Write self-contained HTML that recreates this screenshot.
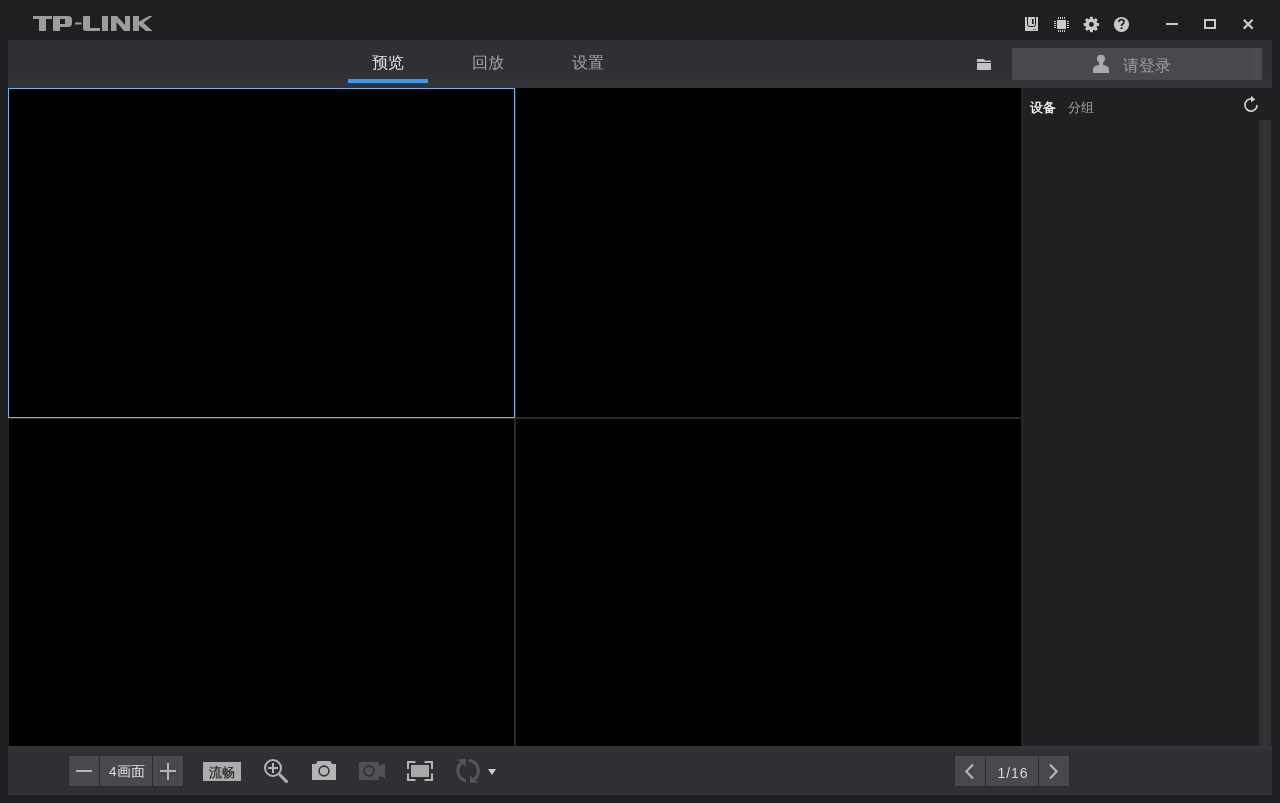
<!DOCTYPE html>
<html><head><meta charset="utf-8">
<style>
*{margin:0;padding:0;box-sizing:border-box}
html,body{width:1280px;height:803px;overflow:hidden;background:#1e1f21;font-family:"Liberation Sans",sans-serif;-webkit-font-smoothing:antialiased}
div{will-change:transform}
.abs{position:absolute}
#nav{left:8px;top:40px;width:1264px;height:48px;background:linear-gradient(#2f3033,#2f3033 60%,#333437)}
.tab{position:absolute;top:53px;font-size:16px;line-height:20px;color:#a3a3a3;white-space:nowrap}
#grid{left:8px;top:88px;width:1013px;height:658px;background:#000}
.cell{position:absolute;border:1px solid #2a2a2b;background:#000}
#panel{left:1021px;top:88px;width:251px;height:658px;background:#1f2022;border-left:2px solid #252628}
#tool{left:8px;top:746px;width:1264px;height:49px;background:linear-gradient(#343539 0,#323336 4px,#2f3033 6px,#2f3033 45px,#333437 49px)}
.btn{position:absolute;background:#48494c}
</style></head><body>
<!-- title bar -->
<svg class="abs" style="left:0;top:0" width="200" height="40">
<g fill="#9c9c9c">
<!-- T -->
<path d="M33 16H52V19H46V31H39V19H33Z"/>
<!-- P -->
<path d="M53 16H68Q72 16 72 20V23Q72 27 68 27H60V31H53ZM60 19V24H65V19Z" fill-rule="evenodd"/>
<!-- - -->
<path d="M75 22.5H81.5V24.5H75Z"/>
<!-- L -->
<path d="M83 16H90V28H100V31H86Q83 31 83 28Z"/>
<!-- I -->
<path d="M102 16H108V31H102Z"/>
<!-- N -->
<path d="M111 16H117L125 25V16H130V31H124L116.5 22V31H111Z"/>
<!-- K -->
<path d="M133 16H139V21.5L149 16H152.5L143.5 22.8L152.5 31H146L139 25.2V31H133Z"/>
</g>
</svg>

<svg class="abs" style="left:1020px;top:12px" width="240" height="26" viewBox="1020 12 240 26">
<g fill="#c8c8c8">
<!-- sd card -->
<path d="M1025 17H1038V31H1025Z"/>
<path d="M1027.5 17V24.5Q1027.5 26.5 1029.5 26.5H1033.5Q1035.5 26.5 1035.5 24.5V17" fill="none" stroke="#1e1f21" stroke-width="1"/>
<rect x="1032" y="19" width="1.7" height="5" fill="#1e1f21"/>
<rect x="1033" y="29" width="3" height="1" fill="#1e1f21" opacity="0.5"/>
<!-- chip -->
<rect x="1057" y="20" width="9" height="9"/>
<g>
<rect x="1058" y="17" width="1" height="2"/><rect x="1060" y="17" width="1" height="2"/><rect x="1062" y="17" width="1" height="2"/><rect x="1064" y="17" width="1" height="2"/>
<rect x="1058" y="30" width="1" height="2"/><rect x="1060" y="30" width="1" height="2"/><rect x="1062" y="30" width="1" height="2"/><rect x="1064" y="30" width="1" height="2"/>
<rect x="1054" y="21" width="2" height="1"/><rect x="1054" y="23" width="2" height="1"/><rect x="1054" y="25" width="2" height="1"/><rect x="1054" y="27" width="2" height="1"/>
<rect x="1067" y="21" width="2" height="1"/><rect x="1067" y="23" width="2" height="1"/><rect x="1067" y="25" width="2" height="1"/><rect x="1067" y="27" width="2" height="1"/>
</g>
<!-- gear -->
<g transform="translate(1091.4 24.5)">
<circle r="6"/>
<g id="teeth"><rect x="-1.5" y="-7.7" width="3" height="3"/></g>
<use href="#teeth" transform="rotate(45)"/><use href="#teeth" transform="rotate(90)"/><use href="#teeth" transform="rotate(135)"/>
<use href="#teeth" transform="rotate(180)"/><use href="#teeth" transform="rotate(225)"/><use href="#teeth" transform="rotate(270)"/><use href="#teeth" transform="rotate(315)"/>
<circle r="2.4" fill="#1e1f21"/>
</g>
<!-- help -->
<circle cx="1121.5" cy="24.5" r="7.6"/>
<path d="M1119 22Q1119 19.7 1121.5 19.7Q1124 19.7 1124 22Q1124 23.3 1122.6 24Q1121.5 24.6 1121.5 26" fill="none" stroke="#1e1f21" stroke-width="1.7"/>
<rect x="1120.6" y="27.3" width="1.8" height="1.8" fill="#1e1f21"/>
<!-- min -->
<rect x="1166" y="23" width="12" height="2"/>
<!-- max -->
<path d="M1204 19H1216V29H1204ZM1206 21V27H1214V21Z" fill-rule="evenodd"/>
</g>
<!-- close -->
<path d="M1243.8 19.8L1252.6 28.6M1252.6 19.8L1243.8 28.6" stroke="#c8c8c8" stroke-width="2.2"/>
</svg>

<!-- nav bar -->
<div id="nav" class="abs"></div>
<div class="tab" style="left:372px;color:#e2e2e2">预览</div>
<div class="abs" style="left:348px;top:79px;width:80px;height:4px;background:#3d9bee"></div>
<div class="tab" style="left:472px">回放</div>
<div class="tab" style="left:572px">设置</div>
<!-- folder -->
<svg class="abs" style="left:970px;top:50px" width="30" height="28" viewBox="970 50 30 28">
<g fill="#c2c2c2"><path d="M977 59H984L985 60.5H991V62H977Z"/><rect x="977" y="63" width="14" height="7"/></g>
</svg>
<div class="btn" style="left:1012px;top:48px;width:250px;height:32px;background:linear-gradient(to right,#48494c 0,#48494c 96%,#4d4e51 98%,#4a4b4e 100%)"></div>
<svg class="abs" style="left:1085px;top:50px" width="30" height="28" viewBox="1085 50 30 28">
<g fill="#a9a9a9"><ellipse cx="1101" cy="58.8" rx="4" ry="4"/><rect x="1099" y="61" width="4.2" height="5"/><path d="M1093 73V69.5Q1093 65.5 1099 65H1103Q1109 65.5 1109 69.5V73Z"/></g>
</svg>
<div class="tab" style="left:1123px;top:56px;color:#9d9d9d">请登录</div>

<!-- grid -->
<div id="grid" class="abs">
<div class="cell" style="left:507px;top:0;width:506px;height:330px;border-color:#000 #000 #2a2a2b #2a2a2b"></div>
<div class="cell" style="left:0;top:330px;width:507px;height:328px;border-color:#2a2a2b #2a2a2b #000 #232324"></div>
<div class="cell" style="left:507px;top:330px;width:506px;height:328px;border-color:#2a2a2b #000 #000 #2a2a2b"></div>
<div class="cell" style="left:0;top:0;width:507px;height:330px;border-color:#7cb0e0"></div>
</div>

<!-- right panel -->
<div id="panel" class="abs"></div>
<div class="abs" style="left:1030px;top:99px;font-size:13px;line-height:18px;color:#fff;-webkit-text-stroke:0.28px #fff">设备</div>
<div class="abs" style="left:1068px;top:99px;font-size:13px;line-height:18px;color:#a0a0a0">分组</div>
<svg class="abs" style="left:1236px;top:90px" width="30" height="30" viewBox="1236 90 30 30">
<path d="M1251.5 98.9A6.1 6.1 0 1 0 1257.1 105" fill="none" stroke="#d0d0d0" stroke-width="1.7"/>
<path d="M1251 95.8L1255.3 99.4L1251 102.2Z" fill="#d0d0d0"/>
</svg>
<div class="abs" style="left:1259px;top:120px;width:12px;height:626px;background:linear-gradient(to right,#2d2e30 0,#2f3032 30%,#353638 50%,#2f3032 75%,#2c2d2f 100%)"></div>

<!-- toolbar -->
<div id="tool" class="abs"></div>
<div class="abs" style="left:68px;top:755px;width:116px;height:32px;background:#2a2b2e"></div>
<div class="btn" style="left:69px;top:756px;width:30px;height:30px"></div>
<div class="btn" style="left:100px;top:756px;width:52px;height:30px"></div>
<div class="btn" style="left:153px;top:756px;width:30px;height:30px"></div>
<div class="abs" style="left:76px;top:770px;width:16px;height:2px;background:#b5b5b5"></div>
<div class="abs" style="left:160px;top:770px;width:16px;height:2px;background:#b5b5b5"></div>
<div class="abs" style="left:167px;top:763px;width:2px;height:17px;background:#b5b5b5"></div>
<div class="abs" style="left:109px;top:764px;font-size:13.5px;line-height:16px;color:#e0e0e0">4画面</div>
<div class="abs" style="left:203px;top:762px;width:38px;height:19px;background:#acacac;color:#1f1f1f;font-size:13px;line-height:21px;text-align:center;-webkit-text-stroke:0.2px #1f1f1f">流畅</div>

<svg class="abs" style="left:250px;top:750px" width="260" height="42" viewBox="250 750 260 42">
<!-- zoom -->
<circle cx="273" cy="768" r="8" fill="none" stroke="#b4b4b4" stroke-width="2"/>
<path d="M268 768H278M273 763V773" stroke="#b4b4b4" stroke-width="2"/>
<path d="M280 775L286.5 781.5" stroke="#b4b4b4" stroke-width="3" stroke-linecap="round"/>
<!-- camera -->
<path d="M312 764H316L317.5 761H330.5L332 764H336V780H312Z" fill="#b4b4b4"/>
<circle cx="324" cy="771" r="4.9" fill="none" stroke="#323337" stroke-width="1.6"/>
<!-- video -->
<path d="M359 762H379V766L385 763.5V778L379 776V780H359Z" fill="#505154"/>
<circle cx="369" cy="771" r="4.9" fill="none" stroke="#2e2f32" stroke-width="1.7"/>
<!-- fullscreen -->
<g fill="none" stroke="#b4b4b4" stroke-width="2">
<path d="M408 769V762H415.5M424.5 762H432V769M432 773.5V780H424.5M415.5 780H408V773.5"/>
</g>
<rect x="411" y="765" width="18" height="12" fill="#a8a8a8"/>
<!-- cycle -->
<g fill="none" stroke="#555659" stroke-width="3">
<path d="M461.5 763A10.3 10.3 0 0 0 466 780.9"/>
<path d="M468.9 760.5A10.3 10.3 0 0 1 473.9 779.2"/>
</g>
<path d="M457.5 759.5L465.7 759V766.5Z" fill="#555659"/>
<path d="M470 775.5V782.7H478.2Z" fill="#555659"/>
<!-- dropdown -->
<path d="M488 769H496L492 775Z" fill="#d0d0d0"/>
</svg>

<!-- pagination -->
<div class="abs" style="left:954px;top:755px;width:116px;height:32px;background:#2a2b2e"></div>
<div class="btn" style="left:955px;top:756px;width:30px;height:30px"></div>
<div class="btn" style="left:986px;top:756px;width:52px;height:30px"></div>
<div class="btn" style="left:1039px;top:756px;width:30px;height:30px"></div>
<svg class="abs" style="left:955px;top:756px" width="116" height="30" viewBox="955 756 116 30">
<path d="M973 764.5L966.3 771.5L973 778.5M1050 764.5L1056.7 771.5L1050 778.5" fill="none" stroke="#b8b8b8" stroke-width="2"/>
</svg>
<div class="abs" style="left:987px;top:765px;width:52px;font-size:14px;line-height:16px;letter-spacing:1px;color:#d8d8d8;text-align:center">1/16</div>
</body></html>
